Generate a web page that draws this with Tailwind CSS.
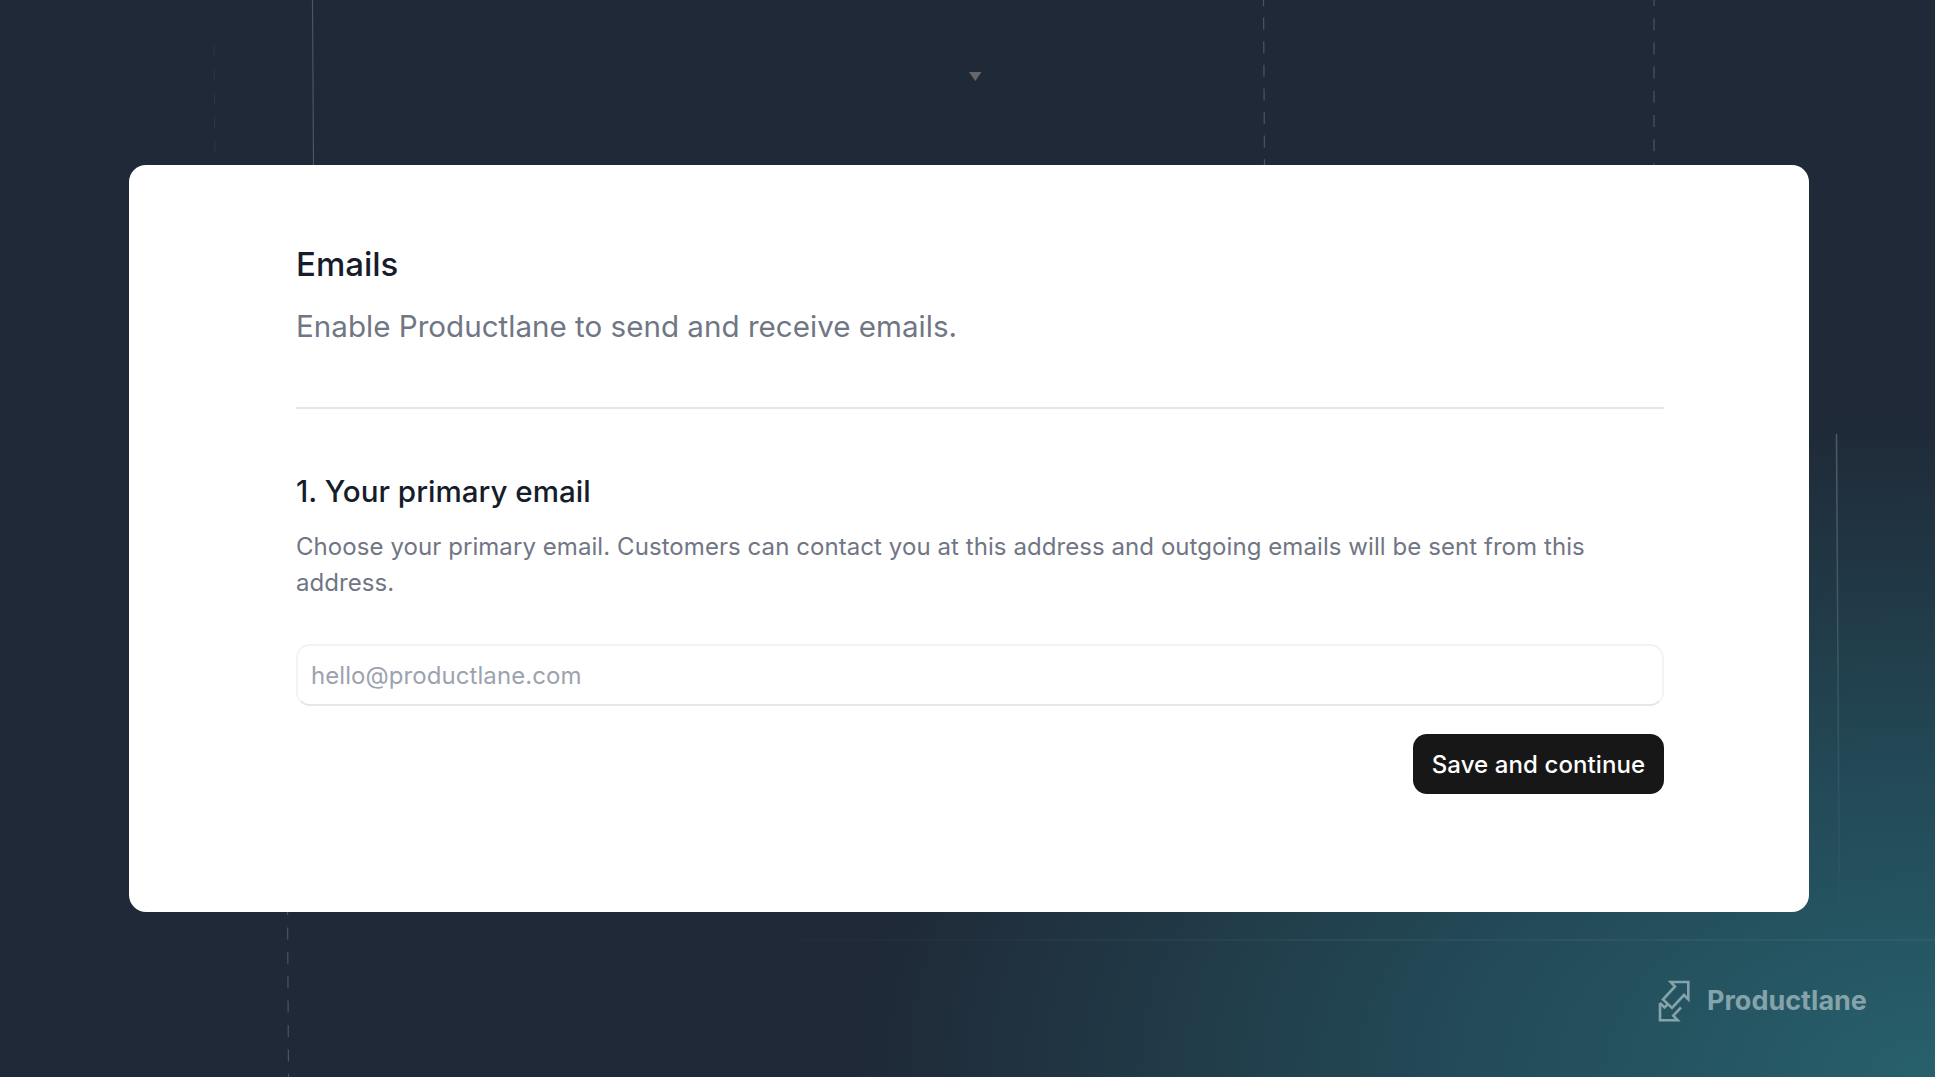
<!doctype html>
<html lang="en">
<head>
<meta charset="utf-8">
<title>Emails</title>
<script src="https://cdn.jsdelivr.net/npm/@tailwindcss/browser@4"></script>
</head>
<body class="m-0">
<main class="relative w-[1935px] h-[1077px] overflow-hidden bg-[radial-gradient(ellipse_1080px_660px_at_100%_100%,#27606c_0%,#234a57_45%,#1f2937_100%)] bg-[#1f2937] font-['Inter',sans-serif] pt-[165px] pl-[129px]">
  <svg class="absolute left-0 top-0" width="1935" height="1077" viewBox="0 0 1935 1077" fill="none">
    <defs>
      <linearGradient id="fadeV" x1="0" y1="434" x2="0" y2="925" gradientUnits="userSpaceOnUse">
        <stop offset="0" stop-color="#ffffff" stop-opacity="0.22"/>
        <stop offset="1" stop-color="#ffffff" stop-opacity="0"/>
      </linearGradient>
      <linearGradient id="fadeH" x1="680" y1="0" x2="1300" y2="0" gradientUnits="userSpaceOnUse">
        <stop offset="0" stop-color="#ffffff" stop-opacity="0"/>
        <stop offset="1" stop-color="#ffffff" stop-opacity="0.08"/>
      </linearGradient>
    </defs>
    <line x1="312.5" y1="0" x2="313.5" y2="165" stroke="#4b5563" stroke-width="1.2"/>
    <line x1="214" y1="45" x2="215" y2="165" stroke="#374151" stroke-width="1" stroke-dasharray="12 12" opacity="0.6"/>
    <line x1="1263.5" y1="-6" x2="1264.5" y2="165" stroke="#4b5563" stroke-width="1.2" stroke-dasharray="12 11.6"/>
    <line x1="1654" y1="-6" x2="1654" y2="165" stroke="#4b5563" stroke-width="1.2" stroke-dasharray="12 12.2"/>
    <line x1="287.5" y1="903" x2="288.5" y2="1077" stroke="#4b5563" stroke-width="1.2" stroke-dasharray="12 12.4"/>
    <line x1="1836.5" y1="434" x2="1839.5" y2="925" stroke="url(#fadeV)" stroke-width="1.5"/>
    <rect x="680" y="939.5" width="1255" height="1" fill="url(#fadeH)"/>
    <path d="M969 72h12.5l-6.2 9z" fill="#666666"/>
  </svg>

  <section class="relative w-[1680px] h-[747px] rounded-[17px] bg-white pt-[81px] pl-[167px] pr-[145px]">
    <h1 class="text-[33px] leading-[36px] font-medium text-[#171c2b]">Emails</h1>
    <p class="mt-[26px] text-[29.6px] leading-[36px] text-[#707684]">Enable Productlane to send and receive emails.</p>
    <hr class="mt-[63px] border-0 h-[2px] bg-[#e5e7eb]">
    <h2 class="mt-[64px] text-[29.6px] leading-[36px] font-medium text-[#171c2b]">1. Your primary email</h2>
    <p class="mt-[20px] text-[24px] tracking-[0.07px] leading-[36px] text-[#707684]">Choose your primary email. Customers can contact you at this address and outgoing emails will be sent from this address.</p>
    <div class="mt-[43px] h-[62px] rounded-[14px] border-2 border-[#f3f4f6] border-b-[#e5e7eb] flex items-center px-[13px] pt-[1px] text-[24px] tracking-[0.07px] text-[#9ca3af]">hello@productlane.com</div>
    <div class="mt-[28px] flex justify-end">
      <button class="h-[60px] w-[251px] rounded-[14px] bg-[#171717] pt-[1px] text-white text-[24px] tracking-[0.1px] font-medium">Save and continue</button>
    </div>
  </section>

  <div class="absolute left-[1650px] top-[971px] flex items-center gap-[10px] text-[#84a3ab]">
    <svg width="47" height="60" viewBox="0 0 47 60" fill="none" stroke="currentColor" stroke-width="2.6">
      <path d="M20.7 11H38.3V28.3L34 24L22 37L13 28.5L25 15.5Z"/>
      <path d="M10 32V49.3H27.7L23.3 44.7L31 36.5M10 32L14.5 36.5L18 33"/>
    </svg>
    <span class="text-[27px] font-bold">Productlane</span>
  </div>
</main>
</body>
</html>
